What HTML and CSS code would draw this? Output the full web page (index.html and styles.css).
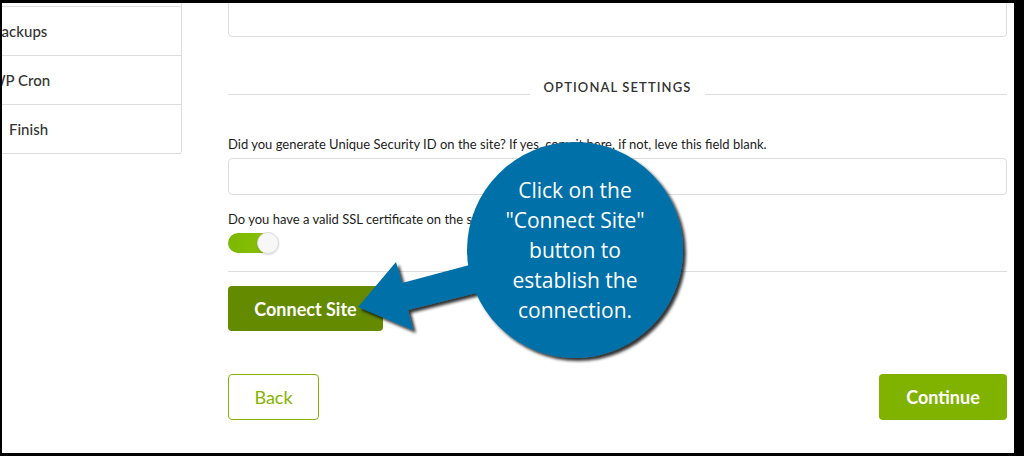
FILE: index.html
```html
<!DOCTYPE html>
<html lang="en">
<head>
    <meta charset="UTF-8">
    <meta name="viewport" content="width=device-width, initial-scale=1.0">
    <title>Connect Site</title>
    <link rel="stylesheet" href="styles.css">
</head>
<body>
    <div class="page">
        <!-- Step list (cut off by the screenshot) -->
        <ul class="steps">
            <li>Add Site</li>
            <li class="step-backups">Backups</li>
            <li class="step-cron">WP Cron</li>
            <li class="step-finish">Finish</li>
        </ul>

        <div class="main">
            <div class="field-box field-top"></div>

            <div class="divider">
                <span class="line"></span>
                <span class="divider-text">OPTIONAL SETTINGS</span>
                <span class="line"></span>
            </div>

            <label class="label label-first" for="securityId">Did you generate Unique Security ID on the site? If yes, copy it here, if not, leve this field blank.</label>
            <input class="field-box field-input" type="text" id="securityId">

            <label class="label label-ssl">Do you have a valid SSL certificate on the site? If yes, enable this option.</label>
            <div class="toggle"><span class="knob"></span></div>

            <hr class="rule">

            <button class="btn btn-connect">Connect Site</button>

            <div class="nav-row">
                <button class="btn btn-back">Back</button>
                <button class="btn btn-continue">Continue</button>
            </div>
        </div>
    </div>

    <!-- Callout annotation -->
    <svg class="callout-shape" width="1024" height="456" viewBox="0 0 1024 456">
        <defs>
            <filter id="shadow" x="-20%" y="-20%" width="140%" height="140%">
                <feDropShadow dx="3" dy="3" stdDeviation="1.6" flood-color="#000" flood-opacity="0.8"/>
            </filter>
        </defs>
        <g filter="url(#shadow)" fill="#0670a9">
            <polygon points="358,307 396,262 402,283 492,259 492,289 408,310 413,330"/>
            <circle cx="575" cy="250" r="108"/>
        </g>
    </svg>
    <div class="callout-text">Click on the<br>"Connect Site"<br>button to<br>establish the<br>connection.</div>
</body>
</html>
```

FILE: styles.css
```css
/* General */
html, body {
    margin: 0;
    height: 456px;
    overflow: hidden;
}

body {
    position: relative;
    background: #000;
    font-family: Lato, "Open Sans", Arial, sans-serif;
    color: #222;
}

.page {
    display: flex;
    align-items: flex-start;
    margin: 3px 10px 3px 2px;
    height: 450px;
    background: #fff;
    overflow: hidden;
}

/* Step list */
.steps {
    list-style: none;
    margin: -45px 0 0 -40px;
    padding: 0;
    width: 219px;
    flex-shrink: 0;
    border-right: 1px solid #ddd;
    border-bottom-right-radius: 4px;
}

.steps li {
    height: 48px;
    line-height: 48px;
    border-bottom: 1px solid #ddd;
    padding-left: 30px;
    font-size: 15px;
    font-weight: 500;
    color: #333;
}

.steps .step-cron {
    padding-left: 28px;
}

.steps .step-finish {
    padding-left: 47px;
}

/* Main column */
.main {
    margin-left: 46px;
    width: 779px;
    display: flex;
    flex-direction: column;
}

.field-box {
    box-sizing: border-box;
    width: 100%;
    border: 1px solid #ddd;
    border-radius: 4px;
    background: #fff;
}

.field-top {
    margin-top: -17px;
    height: 51px;
}

/* Section divider */
.divider {
    display: grid;
    grid-template-columns: 1fr auto 1fr;
    align-items: end;
    margin-top: 40px;
}

.divider .line {
    height: 1px;
    background: #ddd;
    margin-bottom: 2px;
}

.divider-text {
    padding: 0 14px;
    font-size: 13px;
    line-height: 20px;
    font-weight: 600;
    letter-spacing: 1.1px;
    color: #333;
}

/* Labels and inputs */
.label {
    display: block;
    font-size: 13px;
    line-height: 18px;
    color: #1d1d1d;
}

.label-first {
    margin-top: 38px;
}

.field-input {
    margin-top: 5px;
    height: 37px;
    font: inherit;
    outline: none;
}

.label-ssl {
    margin-top: 15px;
}

/* Toggle switch */
.toggle {
    display: flex;
    justify-content: flex-end;
    align-items: center;
    margin-top: 5px;
    width: 50px;
    height: 20px;
    border-radius: 10px;
    background: linear-gradient(to right, #7cb800, #8cc20a);
}

.knob {
    box-sizing: border-box;
    width: 22px;
    height: 22px;
    margin-right: -1px;
    border-radius: 50%;
    background: #f7f7f7;
    border: 1px solid #ddd;
    box-shadow: 0 1px 2px rgba(0, 0, 0, 0.15);
}

.rule {
    width: 100%;
    margin: 18px 0 0;
    border: 0;
    border-top: 1px solid #ddd;
}

/* Buttons */
.btn {
    box-sizing: border-box;
    font-family: Lato, Arial, sans-serif;
    font-size: 18px;
    border-radius: 4px;
    cursor: pointer;
}

.btn-connect {
    align-self: flex-start;
    margin-top: 14px;
    width: 155px;
    height: 45px;
    border: 0;
    background: #648a00;
    color: #fff;
    font-weight: 700;
}

.nav-row {
    display: flex;
    justify-content: space-between;
    margin-top: 43px;
}

.btn-back {
    width: 91px;
    height: 46px;
    background: #fff;
    border: 1px solid #84b300;
    color: #84b300;
}

.btn-continue {
    width: 128px;
    height: 46px;
    border: 0;
    background: #80b300;
    color: #fff;
    font-weight: 700;
}

/* Callout annotation */
.callout-shape {
    position: absolute;
    top: 0;
    left: 0;
}

.callout-text {
    position: absolute;
    top: 175px;
    left: 475px;
    width: 200px;
    text-align: center;
    font-family: "Open Sans", Arial, sans-serif;
    font-size: 21px;
    line-height: 30px;
    color: #fff;
}
```
